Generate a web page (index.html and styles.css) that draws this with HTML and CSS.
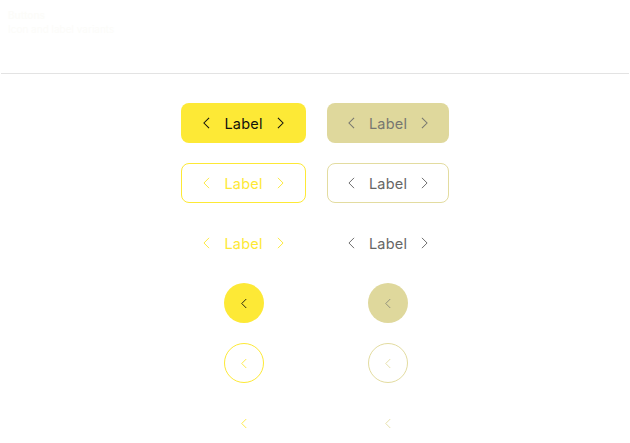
FILE: index.html
```html
<!DOCTYPE html>
<html>
<head>
<meta charset="utf-8">
<link rel="stylesheet" href="styles.css">
</head>
<body>
<header class="top">
  <div class="title">Buttons</div>
  <div class="subtitle">Icon and label variants</div>
</header>
<main class="grid">
  <button class="btn filled"><svg class="chev" viewBox="0 0 8 14"><path d="M7 1L1 7l6 6"/></svg><span>Label</span><svg class="chev" viewBox="0 0 8 14"><path d="M1 1l6 6-6 6"/></svg></button>
  <button class="btn filled dis"><svg class="chev" viewBox="0 0 8 14"><path d="M7 1L1 7l6 6"/></svg><span>Label</span><svg class="chev" viewBox="0 0 8 14"><path d="M1 1l6 6-6 6"/></svg></button>

  <button class="btn outline"><svg class="chev" viewBox="0 0 8 14"><path d="M7 1L1 7l6 6"/></svg><span>Label</span><svg class="chev" viewBox="0 0 8 14"><path d="M1 1l6 6-6 6"/></svg></button>
  <button class="btn outline dis"><svg class="chev" viewBox="0 0 8 14"><path d="M7 1L1 7l6 6"/></svg><span>Label</span><svg class="chev" viewBox="0 0 8 14"><path d="M1 1l6 6-6 6"/></svg></button>

  <button class="btn text"><svg class="chev" viewBox="0 0 8 14"><path d="M7 1L1 7l6 6"/></svg><span>Label</span><svg class="chev" viewBox="0 0 8 14"><path d="M1 1l6 6-6 6"/></svg></button>
  <button class="btn text dis"><svg class="chev" viewBox="0 0 8 14"><path d="M7 1L1 7l6 6"/></svg><span>Label</span><svg class="chev" viewBox="0 0 8 14"><path d="M1 1l6 6-6 6"/></svg></button>

  <div class="cell"><button class="circ filled"><svg class="chev" viewBox="0 0 8 14"><path d="M7 1L1 7l6 6"/></svg></button></div>
  <div class="cell"><button class="circ filled dis"><svg class="chev" viewBox="0 0 8 14"><path d="M7 1L1 7l6 6"/></svg></button></div>

  <div class="cell"><button class="circ outline"><svg class="chev" viewBox="0 0 8 14"><path d="M7 1L1 7l6 6"/></svg></button></div>
  <div class="cell"><button class="circ outline dis"><svg class="chev" viewBox="0 0 8 14"><path d="M7 1L1 7l6 6"/></svg></button></div>

  <div class="cell"><button class="circ plain"><svg class="chev" viewBox="0 0 8 14"><path d="M7 1L1 7l6 6"/></svg></button></div>
  <div class="cell"><button class="circ plain dis"><svg class="chev" viewBox="0 0 8 14"><path d="M7 1L1 7l6 6"/></svg></button></div>
</main>
</body>
</html>
```

FILE: styles.css
```css
* { box-sizing: border-box; }
html, body { margin: 0; padding: 0; background: #fff; }
body {
  font-family: Inter, "Noto Sans", "Liberation Sans", sans-serif;
  width: 630px;
  overflow: hidden;
}
.top {
  height: 74px;
  margin: 0 1px;
  border-bottom: 1px solid #e3e3e3;
  padding: 8px 7px 0;
  color: #fcfcf9;
  font-size: 10px;
  line-height: 14px;
}
.title { font-weight: 600; }
.grid {
  display: grid;
  grid-template-columns: 125px 122px;
  grid-auto-rows: 40px;
  column-gap: 21px;
  row-gap: 20px;
  justify-content: center;
  padding-top: 29px;
}
.btn {
  display: flex;
  align-items: center;
  justify-content: center;
  gap: 14px;
  height: 40px;
  border-radius: 8px;
  border: 1px solid transparent;
  background: transparent;
  font-family: inherit;
  font-size: 14.5px;
  padding: 0;
  letter-spacing: 0.2px;
}
.chev {
  width: 7px;
  height: 12px;
  fill: none;
  stroke: currentColor;
  stroke-width: 1.2;
}
.btn.filled { background: #fde936; color: #111; }
.btn.filled.dis { background: #dfd89c; color: #777770; }
.btn.outline { border-color: #fde936; color: #fde936; }
.btn.outline.dis { border-color: #e3dca0; color: #666; }
.btn.text { color: #fde936; }
.btn.text.dis { color: #666; }
.btn.outline .chev, .btn.text .chev { stroke-width: 1.1; }
.cell { display: flex; justify-content: center; align-items: center; }
.circ {
  width: 40px;
  height: 40px;
  border-radius: 50%;
  border: 1px solid transparent;
  background: transparent;
  display: flex;
  align-items: center;
  justify-content: center;
  padding: 0;
}
.circ .chev { width: 6px; height: 11px; }
.circ.filled { background: #fde936; color: #111; }
.circ.filled.dis { background: #dfd89c; color: #8a8a78; }
.circ.outline { border-color: #fde936; color: #fde936; }
.circ.outline.dis { border-color: #e3dca0; color: #e3dca0; }
.circ.plain { color: #fde936; }
.circ.plain.dis { color: #e3dca0; }
```
